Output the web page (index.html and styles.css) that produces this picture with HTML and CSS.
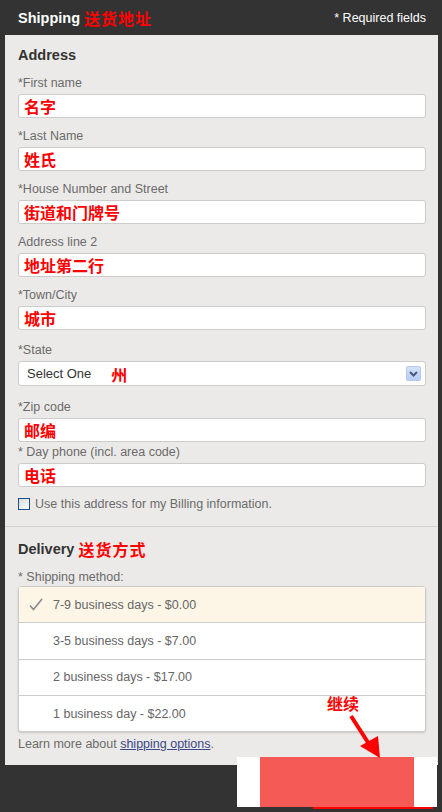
FILE: index.html
```html
<!DOCTYPE html>
<html lang="en">
<head>
    <meta charset="UTF-8"/>
    <title>Shipping</title>
    <link rel="stylesheet" href="styles.css">
</head>
<body>
<header class="page-head">
    <h1 class="page-title">Shipping <span class="zh title-zh">送货地址</span></h1>
    <span class="required-note">* Required fields</span>
</header>
<main class="checkout-panel">
    <section class="address">
        <h2 class="section-title">Address</h2>
        <div class="field">
            <label class="field-label" for="first-name">*First name</label>
            <input class="text-box zh" id="first-name" value="名字">
        </div>
        <div class="field">
            <label class="field-label" for="last-name">*Last Name</label>
            <input class="text-box zh" id="last-name" value="姓氏">
        </div>
        <div class="field">
            <label class="field-label" for="street">*House Number and Street</label>
            <input class="text-box zh" id="street" value="街道和门牌号">
        </div>
        <div class="field">
            <label class="field-label" for="line2">Address line 2</label>
            <input class="text-box zh" id="line2" value="地址第二行">
        </div>
        <div class="field">
            <label class="field-label" for="city">*Town/City</label>
            <input class="text-box zh" id="city" value="城市">
        </div>
        <div class="field field-select">
            <span class="field-label">*State</span>
            <div class="select-box">
                <span class="select-value">Select One</span>
                <span class="zh select-zh">州</span>
                <span class="select-button">
                    <svg width="9" height="6" viewBox="0 0 9 6"><path d="M1 1 L4.5 4.5 L8 1" fill="none" stroke="#4a5a7c" stroke-width="2"/></svg>
                </span>
            </div>
        </div>
        <div class="field field-tight">
            <label class="field-label" for="zip">*Zip code</label>
            <input class="text-box zh" id="zip" value="邮编">
        </div>
        <div class="field field-last">
            <label class="field-label" for="phone">* Day phone (incl. area code)</label>
            <input class="text-box zh" id="phone" value="电话">
        </div>
        <div class="billing-check">
            <span class="check-box"></span>
            <span>Use this address for my Billing information.</span>
        </div>
    </section>
    <section class="delivery">
        <h2 class="section-title">Delivery <span class="zh heading-zh">送货方式</span></h2>
        <span class="field-label method-label">* Shipping method:</span>
        <ul class="ship-options">
            <li class="ship-option selected">
                <span class="check-slot">
                    <svg width="14" height="13" viewBox="0 0 14 13"><path d="M1 7.5 L4.5 11.5 L13 1" fill="none" stroke="#8a8a8a" stroke-width="1.6"/></svg>
                </span>
                7-9 business days - $0.00
            </li>
            <li class="ship-option"><span class="check-slot"></span>3-5 business days - $7.00</li>
            <li class="ship-option"><span class="check-slot"></span>2 business days - $17.00</li>
            <li class="ship-option"><span class="check-slot"></span>1 business day - $22.00</li>
        </ul>
        <p class="learn-more">Learn more about <a href="#">shipping options</a>.</p>
    </section>
</main>

<!-- annotation overlay -->
<div class="annot-bar"></div>
<div class="annot-mask"></div>
<div class="annot-fill"></div>
<span class="annot-label zh">继续</span>
<svg class="annot-arrow" width="40" height="45" viewBox="0 0 40 45">
    <line x1="4" y1="2" x2="22" y2="30" stroke="#f00" stroke-width="4"/>
    <polygon points="13,32 31,22 33,44" fill="#f00"/>
</svg>
</body>
</html>
```

FILE: styles.css
```css
body {
    margin: 0;
    background-color: #333;
    font-family: "Liberation Sans", Arial, sans-serif;
    position: relative;
    min-height: 812px;
}

.zh {
    font-family: "Noto Sans CJK SC", sans-serif;
    color: #f00;
    font-weight: bold;
}

.page-head {
    height: 35px;
    display: flex;
    align-items: center;
    justify-content: space-between;
    padding: 0 16px 0 18px;
    color: white;
}

.page-title {
    margin: 0;
    font-size: 14.5px;
    line-height: 18px;
    font-weight: bold;
    display: flex;
    align-items: center;
    gap: 4px;
}

.title-zh {
    font-size: 16px;
    line-height: 18px;
    letter-spacing: 1px;
}

.required-note {
    font-size: 12.5px;
}

.checkout-panel {
    margin: 0 4px 0 5px;
    background-color: #eceae8;
}

.address {
    padding: 11px 12px 15px 13px;
    border-bottom: 1px solid #d4d2d0;
}

.delivery {
    padding: 13px 12px 14px 13px;
}

.section-title {
    margin: 0 0 12px;
    font-size: 14.5px;
    line-height: 18px;
    font-weight: bold;
    color: #333;
    display: flex;
    align-items: center;
    gap: 4px;
}

.heading-zh {
    font-size: 16px;
    line-height: 18px;
    letter-spacing: 1px;
}

.field {
    margin-bottom: 11px;
}

.field-select {
    margin-top: 13px;
    margin-bottom: 14px;
}

.field-tight {
    margin-bottom: 3px;
}

.field-last {
    margin-bottom: 0;
}

.field-label {
    display: block;
    font-size: 12.5px;
    line-height: 14px;
    color: #6b6b6b;
    margin-bottom: 4px;
}

.text-box {
    display: block;
    box-sizing: border-box;
    width: 100%;
    height: 24px;
    margin: 0;
    border: 1px solid #ccc;
    border-radius: 3px;
    background: #fff;
    padding: 0 5px;
    font-size: 16px;
    outline: none;
}

.select-box {
    box-sizing: border-box;
    height: 25px;
    border: 1px solid #ccc;
    border-radius: 3px;
    background: #fff;
    display: flex;
    align-items: center;
    padding: 0 4px 0 8px;
}

.select-value {
    font-size: 13px;
    color: #333;
}

.select-zh {
    font-size: 16px;
    line-height: 18px;
    margin-left: 20px;
}

.select-button {
    margin-left: auto;
    width: 15px;
    height: 15px;
    box-sizing: border-box;
    border: 1px solid #b9c9ec;
    border-radius: 2px;
    background: linear-gradient(#d6e2fb, #b7cbf6);
    display: flex;
    align-items: center;
    justify-content: center;
}

.billing-check {
    margin-top: 10px;
    display: flex;
    align-items: center;
    gap: 5px;
    font-size: 12.5px;
    line-height: 14px;
    color: #6b6b6b;
}

.check-box {
    width: 12px;
    height: 12px;
    box-sizing: border-box;
    border: 1px solid #1d4f7f;
    background: linear-gradient(135deg, #d8d8d8, #fff);
}

.method-label {
    margin-bottom: 2px;
}

.ship-options {
    list-style-type: none;
    margin: 0;
    padding: 0;
    border: 1px solid #ccc;
    border-radius: 3px;
    background: #fff;
    box-shadow: 0 1px 2px rgba(0, 0, 0, 0.15);
}

.ship-option {
    height: 35.3px;
    display: flex;
    align-items: center;
    padding-left: 10px;
    font-size: 12.5px;
    color: #666;
    border-bottom: 1px solid #ccc;
}

.ship-option:last-child {
    border-bottom: none;
}

.ship-option.selected {
    background-color: #fdf6e7;
}

.check-slot {
    width: 24px;
    display: flex;
    align-items: center;
}

.learn-more {
    margin: 5px 0 0;
    font-size: 12.5px;
    line-height: 14px;
    color: #6b6b6b;
}

.learn-more a {
    color: #3a4887;
}

.annot-bar {
    position: absolute;
    left: 313px;
    top: 806px;
    width: 120px;
    height: 3px;
    background: #f00;
}

.annot-mask {
    position: absolute;
    left: 237px;
    top: 757px;
    width: 200px;
    height: 50px;
    background: #fff;
}

.annot-fill {
    position: absolute;
    left: 260px;
    top: 757px;
    width: 154px;
    height: 50px;
    background: #f55a57;
}

.annot-label {
    position: absolute;
    left: 327px;
    top: 693px;
    font-size: 16px;
    line-height: 20px;
}

.annot-arrow {
    position: absolute;
    left: 347px;
    top: 714px;
}
```
